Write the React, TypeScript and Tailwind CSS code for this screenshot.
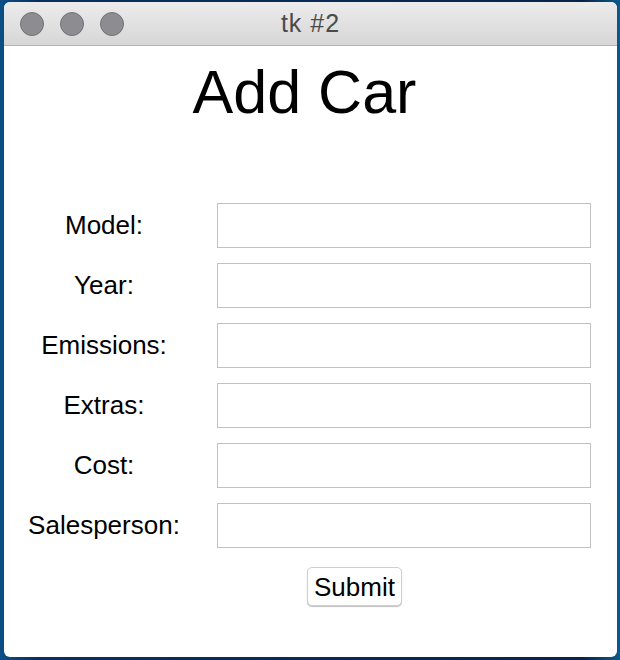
const fields = ['Model:', 'Year:', 'Emissions:', 'Extras:', 'Cost:', 'Salesperson:']

const TrafficLight = () => <div className="w-[24px] h-[24px] rounded-full bg-[#8d8d91] border border-[#727276]" />

const App = () => {
  return (
    <div
      className="w-[620px] h-[660px] pt-[2px] pl-[4px] pr-[3px] pb-[3px] bg-[linear-gradient(90deg,#0c4f86_0%,#0a2f5e_6%,#082a55_50%,#082548_94%,#0d5a8c_100%)]"
      style={{ fontFamily: '"Liberation Sans", Arial, sans-serif' }}
    >
      <div className="flex flex-col h-full rounded-[6px] overflow-hidden bg-white">
        <div className="relative flex items-center h-[44px] shrink-0 bg-[linear-gradient(180deg,#ececec,#d6d6d6)] border-b border-[#b4b4b4]">
          <div className="flex items-center gap-[16px] pl-[16px]">
            <TrafficLight />
            <TrafficLight />
            <TrafficLight />
          </div>
          <div className="absolute inset-0 flex items-center justify-center text-[25px] tracking-[1px] text-[#4a4a4a]">tk #2</div>
        </div>

        <div className="flex flex-col">
          <h1 className="mt-[16px] pr-[12px] text-center text-[61px] leading-none text-black">Add Car</h1>

          <div className="flex flex-col gap-[15px] mt-[80px]">
            {fields.map((label) => (
              <div key={label} className="flex items-center">
                <div className="w-[200px] text-center text-[26px] text-black">{label}</div>
                <input className="ml-[13px] w-[374px] h-[45px] border border-[#c2c2c2] bg-white outline-none" />
              </div>
            ))}
          </div>

          <div className="mt-[19px] pl-[303px]">
            <button className="w-[95px] h-[39px] rounded-[5px] border border-[#cfcfcf] bg-white shadow-[0_1px_1px_rgba(0,0,0,0.25)] text-[26px] leading-none text-black">
              Submit
            </button>
          </div>
        </div>
      </div>
    </div>
  )
}

export default App
